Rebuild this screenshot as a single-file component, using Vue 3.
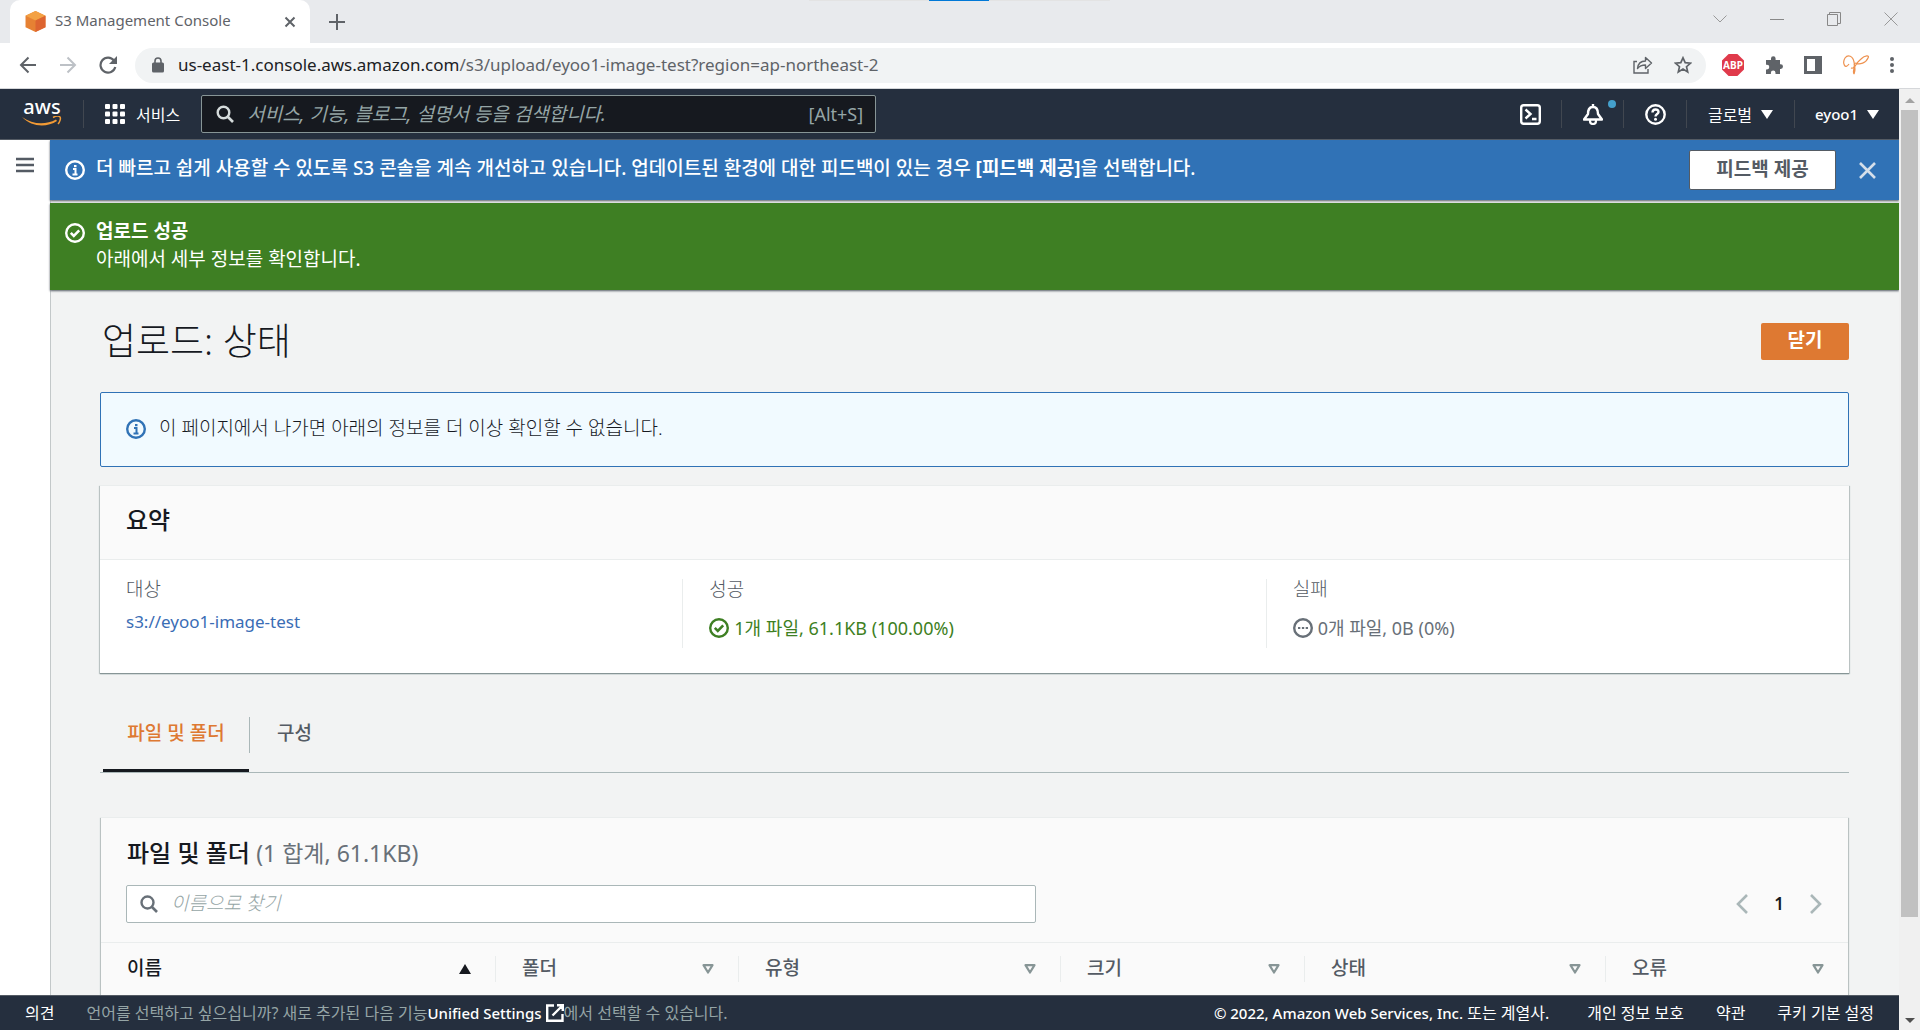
<script setup>
const columns = [
  { label: '이름', width: 395, sorted: true },
  { label: '폴더', width: 243 },
  { label: '유형', width: 322 },
  { label: '크기', width: 244 },
  { label: '상태', width: 301 },
  { label: '오류', width: 242 },
]
const total = columns.reduce((sum, c) => sum + c.width, 0)
</script>

<template>
  <div class="window">
    <header class="tabstrip">
      <div class="tab">
        <svg class="favicon" width="21" height="21" viewBox="0 0 20 20"><path d="M10 0l9.500 4.500v11L10 20 .5 15.500v-11z" fill="#e68133" /><path d="M10 0l9.500 4.500L10 9 .5 4.500z" fill="#f3a144" /><path d="M10 9l9.500-4.500v11L10 20z" fill="#dd6430" /></svg>
        <span class="tab-title">S3 Management Console</span>
        <button class="bare" aria-label="탭 닫기"><svg width="12" height="12" viewBox="0 0 12 12"><path d="M1.500 1.500l9 9m0-9l-9 9" stroke="#5f6368" stroke-width="2" /></svg></button>
      </div>
      <button class="bare newtab" aria-label="새 탭"><svg width="16" height="16" viewBox="0 0 16 16"><path d="M8 0v16M0 8h16" stroke="#5f6368" stroke-width="2" /></svg></button>
      <div class="strip-mark"><i></i></div>
      <div class="window-buttons">
        <button class="bare" aria-label="탭 검색"><svg width="14" height="14" viewBox="0 0 14 14"><path d="M.5 3.500L7 10l6.500-6.500" fill="none" stroke="#999" /></svg></button>
        <button class="bare" aria-label="최소화"><svg width="14" height="14" viewBox="0 0 14 14"><path d="M0 7.500h14" stroke="#888" /></svg></button>
        <button class="bare" aria-label="이전 크기로"><svg width="14" height="14" viewBox="0 0 14 14"><path d="M.5 2.500h10v11H.5zM2.500 2.500v-2h11v11h-3" fill="none" stroke="#888" /></svg></button>
        <button class="bare" aria-label="창 닫기"><svg width="14" height="14" viewBox="0 0 14 14"><path d="M.5 .5l13 13m0-13l-13 13" stroke="#999" /></svg></button>
      </div>
    </header>

    <div class="toolbar">
      <button class="bare nav" aria-label="뒤로"><svg width="18" height="18" viewBox="0 0 18 18"><path d="M17 9H2m7.500-7.500L2 9l7.500 7.500" fill="none" stroke="#5f6368" stroke-width="2" /></svg></button>
      <button class="bare nav" aria-label="앞으로"><svg width="18" height="18" viewBox="0 0 18 18"><path d="M1 9h15M8.500 1.500L16 9l-7.500 7.500" fill="none" stroke="#bdc1c6" stroke-width="2" /></svg></button>
      <button class="bare nav" aria-label="새로고침"><svg width="18" height="18" viewBox="0 0 18 18"><path d="M15 4.500A7.500 7.500 0 1 0 16.300 11" fill="none" stroke="#5f6368" stroke-width="2.200" /><path d="M18 0v8h-8z" fill="#5f6368" /></svg></button>
      <div class="omnibox">
        <svg width="12" height="16" viewBox="0 0 12 16"><path d="M3 6V4a3 3 0 0 1 6 0v2" fill="none" stroke="#5f6368" stroke-width="1.600" /><rect y="5.500" width="12" height="10" rx="1.500" fill="#5f6368" /></svg>
        <span class="url">us-east-1.console.aws.amazon.com<em>/s3/upload/eyoo1-image-test?region=ap-northeast-2</em></span>
        <svg class="share" width="20" height="18" viewBox="0 0 20 18"><path d="M4 5.500H1v11.500h14v-4" fill="none" stroke="#5f6368" stroke-width="1.400" /><path d="M4.500 12.500c.5-5 3.500-7.500 8-7.500V1.500L18.500 7l-6 5.500V9c-3.500 0-6 .8-8 3.500z" fill="none" stroke="#5f6368" stroke-width="1.400" stroke-linejoin="round" /></svg>
        <svg width="18" height="18" viewBox="0 0 18 18"><path d="M9 1.800l2.200 4.900 5.300.5-4 3.500 1.200 5.200L9 13.100l-4.700 2.800 1.200-5.200-4-3.500 5.300-.5z" fill="none" stroke="#5f6368" stroke-width="1.700" /></svg>
      </div>
      <div class="extensions">
        <span class="abp">ABP</span>
        <svg width="18" height="18" viewBox="0 0 18 18"><path d="M1 4h5V2.500a2.300 2.300 0 0 1 4.600 0V4H15v4.300h.7a2.300 2.300 0 0 1 0 4.600H15V18h-4.500v-1.200a2.300 2.300 0 0 0-4.600 0V18H1v-4.600h1a2.300 2.300 0 0 0 0-4.600H1z" fill="#5f6368" /></svg>
        <svg width="18" height="18" viewBox="0 0 18 18"><path d="M0 0h18v18H0zM3 3v12h8V3z" fill="#5f6368" fill-rule="evenodd" /></svg>
        <svg width="26" height="20" viewBox="0 0 26 20"><path d="M6 9C2 15-1 8 2 3c3-4 8-2 9 4 1 4 0 7-3 6M11 19C9 15 13 8 18 4c4-4 9-4 7-1-2 5-8 7-13 5M11 19c1-3 2-5 0-10" fill="none" stroke="#ee9250" stroke-width="1.200" /></svg>
        <svg width="4" height="18" viewBox="0 0 4 18"><circle cx="2" cy="3" r="2" fill="#5f6368" /><circle cx="2" cy="9" r="2" fill="#5f6368" /><circle cx="2" cy="15" r="2" fill="#5f6368" /></svg>
      </div>
    </div>

    <div class="viewport">
      <div class="page">
        <nav class="console-nav">
          <a href="#" class="logo" aria-label="aws">
            <span>aws</span>
            <svg width="40" height="10" viewBox="0 0 40 10"><path d="M0 1c11 8 24 8 34 2.500l1 1.500C25 11.500 10 11.500 0 1z" fill="#f19a35" /><path d="M31 1.500c3-1.500 6-1.500 7-.5s0 5-2 7" fill="none" stroke="#f19a35" stroke-width="1.500" /></svg>
          </a>
          <i class="rule logo-rule"></i>
          <button class="bare services">
            <svg width="20" height="20" viewBox="0 0 20 20" fill="#fff"><rect v-for="n in 9" :key="n" :x="((n - 1) % 3) * 7.500" :y="Math.floor((n - 1) / 3) * 7.500" width="5" height="5" rx="1" /></svg>
            서비스
          </button>
          <label class="global-search">
            <svg width="18" height="18" viewBox="0 0 18 18"><circle cx="7.500" cy="7.500" r="5.800" fill="none" stroke="#d5dbdb" stroke-width="2.400" /><path d="M11.500 11.500l5.500 5.500" stroke="#d5dbdb" stroke-width="2.600" /></svg>
            <input type="text" aria-label="검색" placeholder="서비스, 기능, 블로그, 설명서 등을 검색합니다." />
            <span>[Alt+S]</span>
          </label>
          <div class="nav-tools">
            <button class="bare tool" aria-label="CloudShell"><svg width="21" height="21" viewBox="0 0 21 21"><rect x="1.200" y="1.200" width="18.600" height="18.600" rx="2.500" fill="none" stroke="#fff" stroke-width="2.400" /><path d="M5.500 5.500l5 4.500-5 4.500M12 15h4.500" fill="none" stroke="#fff" stroke-width="2.400" /></svg></button>
            <button class="bare tool bell" aria-label="알림"><svg width="20" height="21" viewBox="0 0 20 21"><path d="M10 0v3M1 15.500h18L15 10c0-4.500-1-7-5-7s-5 2.500-5 7z" fill="none" stroke="#fff" stroke-width="2.400" stroke-linejoin="round" /><path d="M7 16v1a3 3 0 0 0 6 0v-1" fill="none" stroke="#fff" stroke-width="2.200" /></svg><i class="dot"></i></button>
            <button class="bare tool help" aria-label="도움말"><svg width="21" height="21" viewBox="0 0 21 21"><circle cx="10.500" cy="10.500" r="9.200" fill="none" stroke="#fff" stroke-width="2.400" /><path d="M7.500 8.500c0-4 6-4 6-.5 0 2-3 2-3 4.500" fill="none" stroke="#fff" stroke-width="2.400" /><circle cx="10.500" cy="15.200" r="1.500" fill="#fff" /></svg></button>
            <button class="bare tool region">글로벌 <i class="down"></i></button>
            <button class="bare tool account">eyoo1 <i class="down"></i></button>
          </div>
        </nav>

        <div class="body">
          <aside class="side"><button class="bare" aria-label="메뉴 열기"><svg width="18" height="16" viewBox="0 0 18 16"><path d="M0 2h18M0 8h18M0 14h18" stroke="#545b64" stroke-width="2.400" /></svg></button></aside>
          <main class="main">
            <section class="flash info">
              <svg class="status" width="20" height="20" viewBox="0 0 20 20"><circle cx="10" cy="10" r="8.800" fill="none" stroke="currentColor" stroke-width="2.400" /><path d="M8 9h2.500v5M7.500 14.500h5" fill="none" stroke="currentColor" stroke-width="2" /><path d="M9 5h2.500v2.200H9z" fill="currentColor" /></svg>
              <p>더 빠르고 쉽게 사용할 수 있도록 S3 콘솔을 계속 개선하고 있습니다. 업데이트된 환경에 대한 피드백이 있는 경우 <b>[피드백 제공]</b>을 선택합니다.</p>
              <button class="feedback">피드백 제공</button>
              <button class="bare" aria-label="알림 닫기"><svg width="17" height="17" viewBox="0 0 17 17"><path d="M1 1l15 15M16 1L1 16" stroke="#d5dfea" stroke-width="2.600" /></svg></button>
            </section>
            <section class="flash success">
              <svg class="status" width="20" height="20" viewBox="0 0 20 20"><circle cx="10" cy="10" r="8.800" fill="none" stroke="currentColor" stroke-width="2.400" /><path d="M5.800 9.800l3 3 5.400-5.400" fill="none" stroke="currentColor" stroke-width="2.600" /></svg>
              <p><b>업로드 성공</b><br />아래에서 세부 정보를 확인합니다.</p>
            </section>

            <div class="content">
              <div class="title-row">
                <h1>업로드: 상태</h1>
                <button class="primary">닫기</button>
              </div>

              <div class="alert">
                <svg class="status" width="20" height="20" viewBox="0 0 20 20"><circle cx="10" cy="10" r="8.800" fill="none" stroke="currentColor" stroke-width="2.400" /><path d="M8 9h2.500v5M7.500 14.500h5" fill="none" stroke="currentColor" stroke-width="2" /><path d="M9 5h2.500v2.200H9z" fill="currentColor" /></svg>
                <span>이 페이지에서 나가면 아래의 정보를 더 이상 확인할 수 없습니다.</span>
              </div>

              <section class="card summary">
                <h2>요약</h2>
                <dl>
                  <div><dt>대상</dt><dd><a href="#">s3://eyoo1-image-test</a></dd></div>
                  <div><dt>성공</dt><dd class="state ok"><svg width="20" height="20" viewBox="0 0 20 20"><circle cx="10" cy="10" r="8.800" fill="none" stroke="currentColor" stroke-width="2.400" /><path d="M5.800 9.800l3 3 5.400-5.400" fill="none" stroke="currentColor" stroke-width="2.600" /></svg>1개 파일, 61.1KB (100.00%)</dd></div>
                  <div><dt>실패</dt><dd class="state none"><svg width="20" height="20" viewBox="0 0 20 20"><circle cx="10" cy="10" r="8.800" fill="none" stroke="currentColor" stroke-width="2.400" /><path d="M5 10h2.300M8.900 10h2.300M12.700 10H15" stroke="currentColor" stroke-width="2.200" /></svg>0개 파일, 0B (0%)</dd></div>
                </dl>
              </section>

              <div class="tabs" role="tablist">
                <button role="tab" class="active" aria-selected="true">파일 및 폴더</button>
                <button role="tab" aria-selected="false">구성</button>
              </div>

              <section class="card files">
                <h2>파일 및 폴더 <span>(1 합계, 61.1KB)</span></h2>
                <div class="filter">
                  <label class="find">
                    <svg width="18" height="18" viewBox="0 0 18 18"><circle cx="7.500" cy="7.500" r="6" fill="none" stroke="#687078" stroke-width="2.400" /><path d="M12 12l5 5" stroke="#687078" stroke-width="2.600" /></svg>
                    <input type="text" aria-label="이름으로 찾기" placeholder="이름으로 찾기" />
                  </label>
                  <div class="pager">
                    <button class="bare" aria-label="이전 페이지"><svg width="12" height="20" viewBox="0 0 12 20"><path d="M11 1L2 10l9 9" fill="none" stroke="#aab7b8" stroke-width="2.600" /></svg></button>
                    <b>1</b>
                    <button class="bare" aria-label="다음 페이지"><svg width="12" height="20" viewBox="0 0 12 20"><path d="M1 1l9 9-9 9" fill="none" stroke="#aab7b8" stroke-width="2.600" /></svg></button>
                  </div>
                </div>
                <table>
                  <colgroup><col v-for="c in columns" :key="c.label" :style="{ width: (c.width / total) * 100 + '%' }" /></colgroup>
                  <thead>
                    <tr>
                      <th v-for="c in columns" :key="c.label" scope="col" :class="{ sorted: c.sorted }">
                        <div class="th">
                          {{ c.label }}
                          <svg width="12" height="10" viewBox="0 0 12 10"><path v-if="c.sorted" d="M6 0l6 10H0z" fill="#16191f" /><path v-else d="M1.500 1.200h9L6 8.500z" fill="none" stroke="#879596" stroke-width="2.200" stroke-linejoin="round" /></svg>
                        </div>
                      </th>
                    </tr>
                  </thead>
                </table>
              </section>
            </div>
          </main>
        </div>

        <footer class="footer">
          <a href="#" class="opinion">의견</a>
          <p>언어를 선택하고 싶으십니까? 새로 추가된 다음 기능<a href="#">Unified Settings <svg width="18" height="18" viewBox="0 0 18 18"><path d="M8 1.500H1.200v15.300h15.300V10M11 1.200h5.800V7M16.500 1.500L6.500 11.500" fill="none" stroke="#fff" stroke-width="2.400" /></svg></a>에서 선택할 수 있습니다.</p>
          <span class="copyright"><b>© 2022, Amazon Web Services, Inc.</b> 또는 계열사.</span>
          <a href="#">개인 정보 보호</a>
          <a href="#">약관</a>
          <a href="#">쿠키 기본 설정</a>
        </footer>
      </div>

      <div class="scrollbar" aria-hidden="true">
        <i class="arrow up"></i>
        <i class="thumb"></i>
        <i class="arrow dn"></i>
      </div>
    </div>
  </div>
</template>

<style>
body { overflow: hidden; }
</style>

<style scoped>
* { box-sizing: border-box; }
.window {
  height: 100vh;
  display: flex;
  flex-direction: column;
  font-family: "Noto Sans", "Noto Sans CJK KR", sans-serif;
  font-size: 18px;
  line-height: 28px;
  color: #16191f;
  white-space: nowrap;
}
svg { display: block; flex: none; }
p, h1, h2, dl, dd { margin: 0; }
a { text-decoration: none; }
button { font-family: inherit; }
input { font-family: inherit; border: 0; outline: 0; background: none; padding: 0; }
.bare { border: 0; background: none; padding: 0; display: flex; align-items: center; justify-content: center; color: inherit; }

.tabstrip { flex: none; height: 43px; background: #e8eaed; display: flex; align-items: center; padding-left: 10px; position: relative; }
.tab { height: 43px; width: 300px; background: #fff; border-radius: 10px 10px 0 0; display: flex; align-items: center; padding: 0 14px 0 15px; }
.tab-title { flex: 1; margin-left: 9px; padding-bottom: 3px; font-size: 15px; line-height: 20px; color: #5f6368; }
.newtab { margin-left: 19px; }
.strip-mark { position: absolute; left: 809px; top: 0; width: 301px; height: 1px; background: #e3e3e3; }
.strip-mark i { display: block; width: 60px; height: 1px; margin-left: 120px; background: #0078d7; }
.window-buttons { margin-left: auto; display: flex; gap: 43px; padding: 0 22px 6px 0; }

.toolbar { flex: none; height: 46px; padding: 0 26px 1px 19px; border-bottom: 1px solid #d5d7da; display: flex; align-items: center; }
.nav { width: 18px; margin-right: 22px; }
.nav + .omnibox { margin-left: -4px; }
.omnibox { flex: 1; height: 35px; margin-right: 16px; padding: 0 14px 0 17px; border-radius: 18px; background: #f1f3f4; display: flex; align-items: center; }
.url { flex: 1; margin-left: 14px; color: #202124; font-size: 17px; }
.url em { font-style: normal; color: #5f6368; }
.share { margin-right: 21px; }
.extensions { display: flex; align-items: center; gap: 21px; }
.abp { width: 22px; height: 22px; background: #e03a4b; color: #fff; font-size: 10px; line-height: 22px; font-weight: 700; text-align: center; clip-path: polygon(30% 0, 70% 0, 100% 30%, 100% 70%, 70% 100%, 30% 100%, 0 70%, 0 30%); }

.viewport { flex: 1; min-height: 0; display: flex; }
.page { flex: 1; min-width: 0; display: flex; flex-direction: column; }
.scrollbar { width: 21px; background: #f0f0f0; display: flex; flex-direction: column; align-items: center; padding: 9px 0 7px; }
.arrow { border: 5px solid transparent; }
.up { border-top: 0; border-bottom-color: #a3a3a3; }
.dn { border-bottom: 0; border-top-color: #505050; }
.thumb { width: 17px; height: 807px; margin: 7px 0 auto; background: #c1c1c1; }

.console-nav { flex: none; height: 51px; background: #252f3e; border-bottom: 1px solid #545b64; color: #fff; display: flex; align-items: center; padding-left: 22px; }
.logo { width: 40px; color: #fff; display: flex; flex-direction: column; align-items: center; padding-bottom: 3px; }
.logo span { font-size: 20px; line-height: 16px; font-weight: 500; height: 17px; }
.rule { width: 1px; height: 28px; background: #414750; }
.logo-rule { margin: 0 21px; }
.services { gap: 11px; font-size: 16px; color: #fff; }
.global-search { width: 675px; height: 38px; margin-left: 21px; padding: 0 12px 0 14px; border: 1px solid #879596; border-radius: 2px; background: #16191f; color: #95a5a6; display: flex; align-items: center; font-size: 18px; }
.global-search input { flex: 1; min-width: 0; margin-left: 13px; font-size: 19px; font-style: italic; }
.global-search input::placeholder { color: #95a5a6; opacity: 1; }
.nav-tools { margin-left: auto; display: flex; align-items: center; }
.tool { position: relative; height: 28px; width: 62px; font-size: 16px; color: #fff; border-left: 1px solid #414750; }
.tool:first-child { border-left: 0; }
.help { width: 63px; }
.region { width: 108px; gap: 9px; }
.account { width: 105px; gap: 9px; font-size: 15px; font-weight: 500; }
.down { border: 6px solid transparent; border-top: 9px solid #fff; border-bottom: 0; }
.dot { position: absolute; right: 7px; top: 0; width: 8px; height: 8px; border-radius: 50%; background: #44a0cc; }

.body { flex: 1; min-height: 0; display: flex; overflow: hidden; }
.side { width: 50px; padding: 17px 0 0 16px; background: #fff; }
.main { flex: 1; min-width: 0; background: #f2f3f3; border-left: 1px solid #c3c8c9; }
.flash { margin-left: -1px; position: relative; display: flex; color: #fff; padding: 10px 23px 10px 15px; font-size: 19px; box-shadow: 0 1px 2px #545b64; }
.flash p { flex: 1; margin: 4px 0 0 11px; }
.flash .status { margin-top: 10px; }
.info { height: 60px; background: #3072b6; margin-bottom: 3px; }
.info p { font-weight: 500; }
.feedback { width: 147px; height: 40px; margin-right: 23px; padding: 0 0 5px; border: 1px solid #545b64; border-radius: 2px; background: #fff; color: #545b64; font-size: 19px; font-weight: 700; }
.success { height: 87px; background: #3e7f23; }

.content { padding: 28px 50px 0 49px; }
.title-row { display: flex; align-items: center; justify-content: space-between; height: 46px; padding-left: 2px; }
h1 { font-size: 37px; line-height: 46px; font-weight: 300; }
.primary { width: 88px; height: 37px; padding: 0 0 5px; border: 0; border-radius: 2px; background: #de7932; color: #fff; font-size: 19px; font-weight: 700; }
.alert { margin-top: 28px; height: 75px; border: 1px solid #3072b6; border-radius: 2px; background: #f1faff; display: flex; align-items: center; gap: 13px; padding: 0 0 2px 25px; color: #3072b6; }
.alert span { color: #16191f; font-size: 19px; padding-bottom: 2px; font-weight: 300; }

.card { background: #fff; box-shadow: 0 1px 1px #879596, 1px 1px 1px #c5cccc, -1px 1px 1px #c5cccc; border-top: 1px solid #eaeded; }
h2 { font-size: 24px; line-height: 32px; font-weight: 500; }
.summary { margin-top: 18px; height: 188px; }
.summary h2 { height: 74px; padding: 18px 26px 0; background: #fafafa; border-bottom: 1px solid #eaeded; }
dl { display: flex; padding-top: 19px; }
dl div { flex: 1; height: 69px; padding-left: 26px; border-right: 1px solid #eaeded; }
dl div:last-child { border-right: 0; }
dt { color: #545b64; line-height: 20px; font-weight: 300; font-size: 19px; }
dd a { color: #3a6db5; font-size: 17px; line-height: 46px; }
.state { display: flex; align-items: center; gap: 5px; margin-top: 14px; line-height: 30px; }
.ok { color: #3e7f23; }
.none { color: #687078; }

.tabs { margin-top: 44px; height: 56px; display: flex; border-bottom: 1px solid #aab7b8; padding-left: 3px; }
.tabs button { position: relative; height: 36px; border: 0; background: none; padding: 0 27px 7px; color: #545b64; font-size: 19px; font-weight: 500; }
.tabs .active { width: 147px; padding: 0 0 7px; color: #de7932; border-right: 1px solid #aab7b8; }
.tabs .active::after { content: ""; position: absolute; left: 0; right: 0; bottom: -19px; height: 3px; background: #16191f; }

.files { margin: 44px 1px 0; height: 260px; padding-top: 19px; background: #fafafa; }
.files h2 { padding-left: 26px; }
.files h2 span { color: #687078; font-size: 23px; font-weight: 400; }
.filter { display: flex; align-items: center; justify-content: space-between; margin: 16px 26px 19px 25px; }
.find { flex: 0 1 910px; height: 38px; display: flex; align-items: center; padding-left: 13px; border: 1px solid #aab7b8; border-radius: 2px; background: #fff; }
.find input { flex: 1; margin-left: 13px; padding-bottom: 2px; font-size: 19px; font-style: italic; font-weight: 300; }
.find input::placeholder { color: #95a5a6; opacity: 1; }
.pager { display: flex; align-items: center; gap: 26px; font-size: 17px; }
.pager b { font-weight: 600; }
table { width: 100%; table-layout: fixed; border-collapse: collapse; border-top: 1px solid #eaeded; }
th { padding: 13px 0; text-align: left; font-size: 19px; line-height: 24px; font-weight: 500; color: #545b64; }
.sorted { color: #16191f; }
.th { display: flex; align-items: center; justify-content: space-between; height: 26px; padding: 0 24px 2px 26px; border-right: 1px solid #eaeded; }
.th svg { margin-top: 2px; }
th:last-child .th { border-right: 0; }

.footer { flex: none; position: relative; height: 35px; background: #252f3e; border-top: 1px solid #545b64; display: flex; align-items: center; padding: 0 25px; gap: 32px; font-size: 16px; color: #fff; }
.footer a { color: #fff; }
.footer p { display: flex; flex: 1; color: #95a5a6; font-size: 16px; }
.footer p a { display: flex; align-items: center; gap: 4px; font-size: 15px; font-weight: 500; }
.copyright { margin-right: 6px; }
.copyright b { font-size: 15px; font-weight: 500; }
</style>
